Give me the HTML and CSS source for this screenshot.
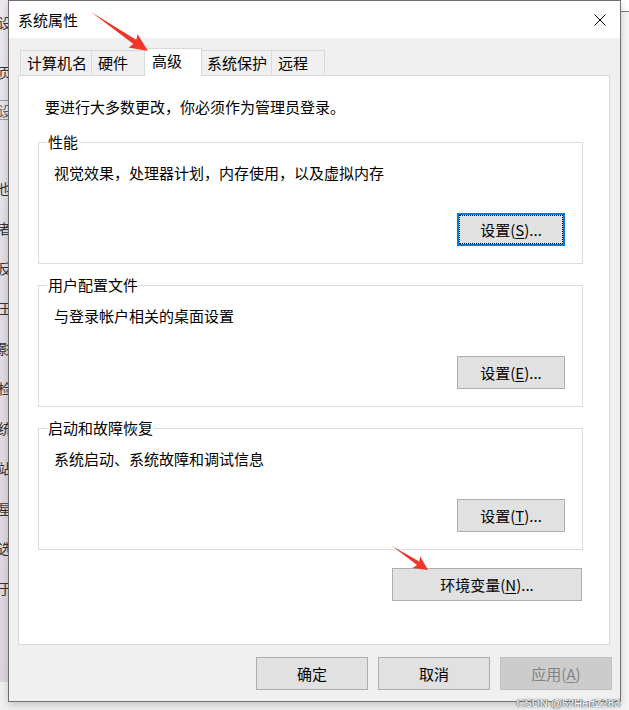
FILE: index.html
```html
<!DOCTYPE html>
<html lang="zh-CN">
<head>
<meta charset="utf-8">
<title>系统属性</title>
<link rel="stylesheet" href="styles.css">
</head>
<body>
<div class="screen">
  <div class="bg-left">
    <div class="bg-chars">
      <span class="c c1">设</span>
      <span class="c c2">页</span>
      <span class="c c3 boxed">设</span>
      <span class="c c4">也</span>
      <span class="c">者</span>
      <span class="c">反</span>
      <span class="c">王</span>
      <span class="c">影</span>
      <span class="c">检</span>
      <span class="c">统</span>
      <span class="c">站</span>
      <span class="c">星</span>
      <span class="c">选</span>
      <span class="c">于</span>
    </div>
  </div>

  <div class="window">
    <div class="titlebar">
      <span class="title">系统属性</span>
      <svg class="close" width="12" height="12" viewBox="0 0 12 12"><path d="M0.5 0.5 L11.5 11.5 M11.5 0.5 L0.5 11.5" stroke="#000" stroke-width="1" fill="none"/></svg>
    </div>
    <div class="client">
      <div class="tabs">
        <div class="tab tab-1">计算机名</div>
        <div class="tab tab-2">硬件</div>
        <div class="tab tab-3 active">高级</div>
        <div class="tab tab-4">系统保护</div>
        <div class="tab tab-5">远程</div>
      </div>
      <div class="panel">
        <p class="notice">要进行大多数更改，你必须作为管理员登录。</p>
        <fieldset class="group">
          <legend>性能</legend>
          <div class="desc">视觉效果，处理器计划，内存使用，以及虚拟内存</div>
          <div class="actions"><button class="btn btn-set btn-focus">设置(<u>S</u>)...</button></div>
        </fieldset>
        <fieldset class="group">
          <legend>用户配置文件</legend>
          <div class="desc">与登录帐户相关的桌面设置</div>
          <div class="actions"><button class="btn btn-set">设置(<u>E</u>)...</button></div>
        </fieldset>
        <fieldset class="group">
          <legend>启动和故障恢复</legend>
          <div class="desc">系统启动、系统故障和调试信息</div>
          <div class="actions"><button class="btn btn-set">设置(<u>T</u>)...</button></div>
        </fieldset>
        <div class="env-row"><button class="btn btn-env">环境变量(<u>N</u>)...</button></div>
      </div>
      <div class="footer">
        <button class="btn btn-foot">确定</button>
        <button class="btn btn-foot">取消</button>
        <button class="btn btn-foot btn-disabled">应用(<u>A</u>)</button>
      </div>
    </div>
  </div>

  <div class="bg-right">
    <div class="bg-right-top"></div>
    <div class="bg-right-rest"></div>
  </div>

  <svg class="annot" width="629" height="710" viewBox="0 0 629 710">
    <polygon points="91,12 136.2,39.8 137.6,34.2 148,51 128.6,47.4 133.4,44" fill="#f0352a"/>
    <polygon points="392,546 419.2,561.6 420.3,556.4 428,570 412.5,568 417,565" fill="#f0352a"/>
  </svg>
  <div class="watermark">CSDN @52HertZ283</div>
</div>
</body>
</html>
```

FILE: styles.css
```css
* { box-sizing: border-box; }

body {
  margin: 0;
  background: #f0f0f0;
}

.screen {
  position: relative;
  width: 629px;
  height: 710px;
  display: flex;
  align-items: flex-start;
  overflow: hidden;
  background: #f0f0f0;
  font-family: "Noto Sans CJK SC", "Microsoft YaHei", "Liberation Sans", sans-serif;
  font-size: 15px;
  color: #000;
}

/* background application strip on the left */
.bg-left {
  width: 8px;
  height: 682px;
  flex-shrink: 0;
  overflow: hidden;
  background: linear-gradient(180deg, #ece8ee 0%, #e3dde6 40%, #ddd6e0 100%);
}
.bg-chars {
  display: flex;
  flex-direction: column;
  margin-left: -2px;
  width: 20px;
}
.c {
  display: block;
  height: 20px;
  line-height: 20px;
  font-size: 14px;
  color: #333;
  margin-top: 20px;
}
.c1 { margin-top: 12px; }
.c2 { margin-top: 30px; }
.c3 { margin-top: 18px; }
.c4 { margin-top: 58px; }
.boxed {
  border-top: 1px solid #999;
  border-bottom: 1px solid #999;
  line-height: 18px;
  color: #666;
}

/* window */
.window {
  width: 613px;
  height: 702px;
  flex-shrink: 0;
  border: 1px solid #6e6e6e;
  background: #f0f0f0;
  display: flex;
  flex-direction: column;
  box-shadow: 0 3px 8px rgba(0, 0, 0, 0.18);
  position: relative;
  z-index: 1;
}

.titlebar {
  height: 37px;
  background: #fff;
  display: flex;
  align-items: center;
  padding-left: 9px;
  flex-shrink: 0;
}
.title {
  font-size: 15px;
  line-height: 20px;
  margin-top: 1px;
}
.close {
  margin-left: auto;
  margin-right: 14px;
  margin-top: 1px;
}

.client {
  flex: 1;
  display: flex;
  flex-direction: column;
  padding: 10px 10px 0 9px;
}

/* tabs */
.tabs {
  display: flex;
  align-items: flex-end;
  padding-left: 2px;
}
.tab {
  height: 25px;
  line-height: 23px;
  border: 1px solid #d9d9d9;
  border-bottom: none;
  background: #f0f0f0;
  padding-left: 6px;
  white-space: nowrap;
}
.tab + .tab { margin-left: -1px; }
.tab-1 { width: 72px; }
.tab-2 { width: 54px; }
.tab-3 { width: 58px; }
.tab-4 { width: 71px; padding-left: 5px; }
.tab-5 { width: 54px; }
.tab.active {
  height: 28px;
  line-height: 24px;
  background: #fff;
  margin-bottom: -1px;
  padding-left: 7px;
  position: relative;
  z-index: 2;
}

/* panel */
.panel {
  height: 570px;
  background: #fff;
  border: 1px solid #d9d9d9;
  padding-top: 21px;
  display: flex;
  flex-direction: column;
}
.notice {
  margin: 0;
  padding-left: 26px;
  line-height: 20px;
}

.group {
  margin: 15px 26px 0 19px;
  padding: 0 0 17px 0;
  border: 1px solid #dcdcdc;
  min-width: 0;
}
.group + .group { margin-top: 11px; }
.group legend {
  margin-left: 8px;
  padding: 0 1px;
  line-height: 20px;
  font-size: 15px;
}
.desc {
  margin-top: 11px;
  padding-left: 15px;
  line-height: 20px;
}
.actions {
  display: flex;
  justify-content: flex-end;
  padding-right: 17px;
  margin-top: 30px;
}

.btn {
  font-family: inherit;
  font-size: 15px;
  color: #000;
  background: #e1e1e1;
  border: 1px solid #adadad;
  padding: 0;
  height: 33px;
  line-height: 20px;
  text-align: center;
  white-space: nowrap;
}
.btn u { text-underline-offset: 2px; }
.btn-set { width: 108px; }
.btn-focus {
  border: 2px solid #0078d7;
  outline: 1px dotted #000;
  outline-offset: -3px;
}

.env-row {
  display: flex;
  justify-content: flex-end;
  margin: 18px 27px 0 0;
}
.btn-env { width: 190px; }

/* footer */
.footer {
  display: flex;
  justify-content: flex-end;
  gap: 10px;
  margin-top: 12px;
  margin-right: -2px;
}
.btn-foot { width: 112px; height: 33px; }
.btn-disabled {
  background: #cccccc;
  border-color: #bfbfbf;
  color: #838383;
}

/* right background strip */
.bg-right {
  flex: 1;
  display: flex;
  flex-direction: column;
  height: 710px;
}
.bg-right-top {
  height: 12px;
  background: #fff;
  border-bottom: 1px solid #7a7a7a;
}
.bg-right-rest {
  flex: 1;
  background: #f4f4f4;
}

/* annotations */
.annot {
  position: absolute;
  left: 0;
  top: 0;
  pointer-events: none;
  z-index: 5;
}
.watermark {
  position: absolute;
  right: 9px;
  bottom: 1px;
  z-index: 6;
  font-family: "Liberation Sans", "Noto Sans", sans-serif;
  font-size: 11px;
  line-height: 12px;
  color: #fafafa;
  text-shadow: 0 0 1px #777, 0 0 1px #777, 1px 0 0 #999, -1px 0 0 #999;
}
```
